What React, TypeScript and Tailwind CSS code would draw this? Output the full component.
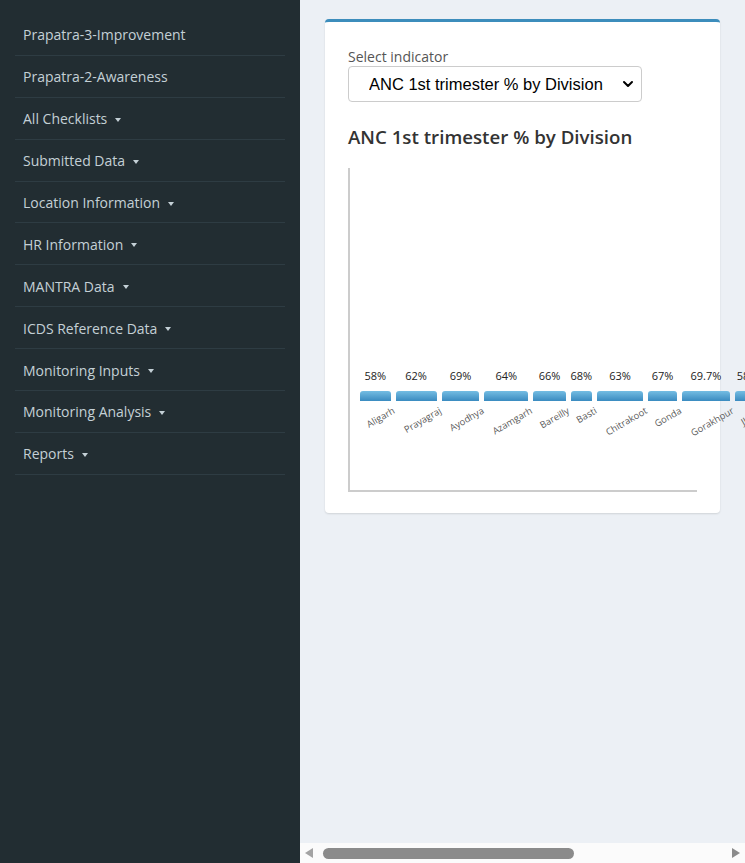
import { ChevronDown } from "lucide-react";

const menu = [
  { label: "Prapatra-3-Improvement", caret: false },
  { label: "Prapatra-2-Awareness", caret: false },
  { label: "All Checklists", caret: true },
  { label: "Submitted Data", caret: true },
  { label: "Location Information", caret: true },
  { label: "HR Information", caret: true },
  { label: "MANTRA Data", caret: true },
  { label: "ICDS Reference Data", caret: true },
  { label: "Monitoring Inputs", caret: true },
  { label: "Monitoring Analysis", caret: true },
  { label: "Reports", caret: true },
];

const divisions = [
  { name: "Aligarh", value: "58%" },
  { name: "Prayagraj", value: "62%" },
  { name: "Ayodhya", value: "69%" },
  { name: "Azamgarh", value: "64%" },
  { name: "Bareilly", value: "66%" },
  { name: "Basti", value: "68%" },
  { name: "Chitrakoot", value: "63%" },
  { name: "Gonda", value: "67%" },
  { name: "Gorakhpur", value: "69.7%" },
  { name: "Jhansi", value: "58%" },
  { name: "Kanpur", value: "61%" },
  { name: "Lucknow", value: "65%" },
  { name: "Meerut", value: "70%" },
  { name: "Mirzapur", value: "60%" },
  { name: "Moradabad", value: "64%" },
  { name: "Saharanpur", value: "66%" },
];

export default function App() {
  return (
    <div className="flex h-screen w-full font-['Open_Sans',sans-serif]">
      {/* Sidebar */}
      <aside className="w-[300px] shrink-0 bg-[#222d32] px-[15px] pt-[14px]">
        {menu.map((item) => (
          <div
            key={item.label}
            className="flex h-[41.9px] items-center border-b border-[#2e3c43] px-2 pt-[1px] text-[14px] text-[#c4d0d6]"
          >
            <span>{item.label}</span>
            {item.caret && (
              <span className="ml-[8px] mt-[2px] inline-block border-x-[3px] border-t-[4px] border-x-transparent border-t-[#c4d0d6]" />
            )}
          </div>
        ))}
      </aside>

      {/* Main */}
      <main className="flex min-w-0 flex-1 flex-col bg-[#ecf0f5]">
        <div className="min-h-0 flex-1 overflow-hidden px-[25px] pt-[19px]">
          <div className="rounded-[4px] border-t-[3px] border-[#3c8dbc] bg-white px-[23px] pb-[21px] pt-[25px] shadow-[0_1px_2px_rgba(0,0,0,0.12)]">
            <label className="block text-[14px] leading-[19px] text-[#555]">Select indicator</label>
            <div className="relative w-[294px]">
              <select className="h-[36px] w-full appearance-none rounded-[4px] border border-[#ccc] bg-white pl-[20px] font-['Liberation_Sans',Arial,sans-serif] text-[16.5px] text-black outline-none">
                <option>ANC 1st trimester % by Division</option>
              </select>
              <ChevronDown
                size={16}
                strokeWidth={3}
                className="pointer-events-none absolute right-[6px] top-[10px] text-black"
              />
            </div>

            <h3 className="mt-[22px] text-[18.7px] font-semibold leading-[26px] text-[#333]">
              ANC 1st trimester % by Division
            </h3>

            {/* Chart */}
            <div className="mt-[18px] h-[324px] border-b-2 border-l-2 border-[#ccc] pl-[10px] pt-[200px]">
              <div className="flex items-start gap-[5px]">
                {divisions.map((d) => (
                  <div key={d.name} className="flex flex-col">
                    <div className="flex w-0 min-w-full justify-center">
                      <span className="whitespace-nowrap text-[11px] leading-[16px] text-[#222]">
                        {d.value}
                      </span>
                    </div>
                    <div className="mt-[7px] h-[10px] rounded-t-[3px] bg-gradient-to-b from-[#74bde3] to-[#3a8bc0]" />
                    <div className="mt-[3px] origin-top-right -rotate-30 whitespace-nowrap text-[9.4px] leading-[13px] text-[#5a5a5a]">
                      {d.name}
                    </div>
                  </div>
                ))}
              </div>
            </div>
          </div>
        </div>

        {/* Horizontal scrollbar */}
        <div className="flex h-[20px] shrink-0 items-center bg-[#fbfbfb] px-[5px]">
          <span className="inline-block border-y-[5px] border-r-[8px] border-y-transparent border-r-[#a3a3a3]" />
          <div className="ml-[10px] h-[11px] w-[251px] rounded-full bg-[#8b8b8b]" />
          <span className="ml-auto inline-block border-y-[5px] border-l-[8px] border-y-transparent border-l-[#8b8b8b]" />
        </div>
      </main>
    </div>
  );
}
